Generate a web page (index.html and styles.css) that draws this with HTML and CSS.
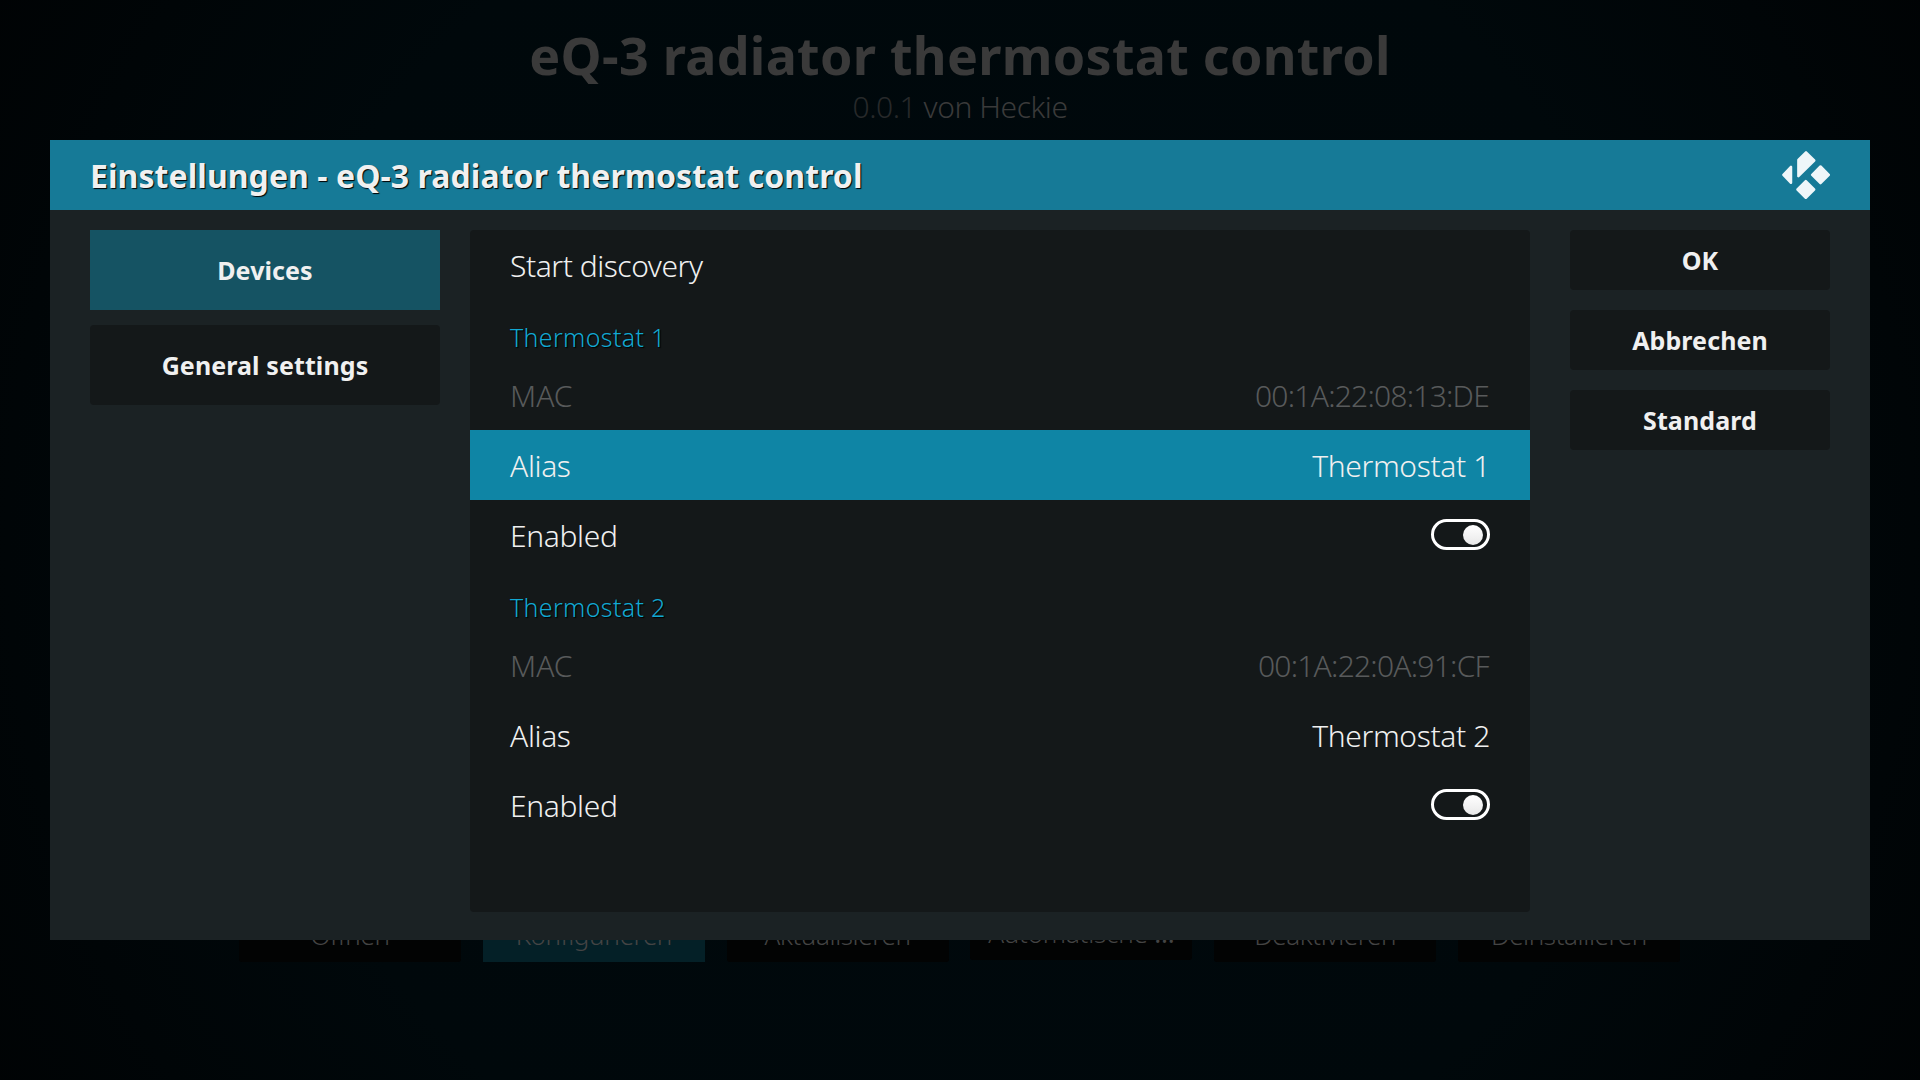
FILE: index.html
```html
<!DOCTYPE html>
<html lang="de">
<head>
<meta charset="utf-8">
<title>Einstellungen</title>
<link rel="stylesheet" href="styles.css">
</head>
<body>
<div class="screen">
  <header class="addon">
    <h1 class="addon-name">eQ-3 radiator thermostat control</h1>
    <p class="addon-meta"><span class="version">0.0.1</span> von Heckie</p>
  </header>

  <main class="dialog">
    <div class="titlebar">
      <h2 class="title">Einstellungen - eQ-3 radiator thermostat control</h2>
      <svg class="logo" viewBox="0 0 48 48" aria-hidden="true">
        <path d="M1.4 23.8 9 15.8V31.8Z"/>
        <path d="M16.4 8.8 24 1.4 32.2 9.5 16.4 25.2Z"/>
        <path d="M38.5 15.5 46.8 23.8 38.5 32.1 30.2 23.8Z"/>
        <path d="M23.8 30.2 32.1 38.5 23.8 46.8 15.5 38.5Z"/>
      </svg>
    </div>
    <div class="content">
      <nav class="categories">
        <button class="button category selected">Devices</button>
        <button class="button category">General settings</button>
      </nav>
      <section class="settings">
        <div class="row"><span class="command">Start discovery</span></div>
        <h3 class="group">Thermostat 1</h3>
        <div class="row disabled"><span>MAC</span><span class="address">00:1A:22:08:13:DE</span></div>
        <div class="row focused"><span>Alias</span><span>Thermostat 1</span></div>
        <div class="row"><span>Enabled</span><i class="toggle"></i></div>
        <h3 class="group">Thermostat 2</h3>
        <div class="row disabled"><span>MAC</span><span class="address">00:1A:22:0A:91:CF</span></div>
        <div class="row"><span>Alias</span><span>Thermostat 2</span></div>
        <div class="row"><span>Enabled</span><i class="toggle"></i></div>
      </section>
      <div class="actions">
        <button class="button">OK</button>
        <button class="button">Abbrechen</button>
        <button class="button">Standard</button>
      </div>
    </div>
  </main>

  <footer class="addon-actions">
    <div class="addon-action">Öffnen</div>
    <div class="addon-action current">Konfigurieren</div>
    <div class="addon-action">Aktualisieren</div>
    <div class="addon-action short">Automatische <b>...</b></div>
    <div class="addon-action">Deaktivieren</div>
    <div class="addon-action">Deinstallieren</div>
  </footer>
</div>
</body>
</html>
```
FILE: styles.css
```css
* { box-sizing: border-box; margin: 0; padding: 0; }

body {
  width: 1920px;
  height: 1080px;
  overflow: hidden;
  background: #000304;
  font-family: "Noto Sans", "Open Sans", sans-serif;
  color: #f0f0f0;
}

.screen {
  display: flex;
  flex-direction: column;
  height: 1080px;
  background: radial-gradient(ellipse 62% 110% at 50% 50%, #00090d 0%, #00080b 60%, #000203 100%);
}

.addon {
  height: 140px;
  padding-top: 17px;
  text-align: center;
  color: #3a3a3a;
}
.addon-name {
  font-size: 52px;
  line-height: 76px;
  font-weight: 700;
  letter-spacing: 0.28px;
}
.addon-meta {
  margin-top: 1px;
  font-size: 30px;
  line-height: 26px;
  font-weight: 300;
  letter-spacing: -0.45px;
}
.version { color: #27292a; }

/* The dialog covers the upper part of the add-on action buttons. */
.dialog {
  position: relative;
  z-index: 1;
  height: 800px;
  margin: 0 50px;
  background: #1b2224;
}

.titlebar {
  display: flex;
  justify-content: space-between;
  height: 70px;
  padding: 11px 40px 0;
  background: #167a97;
}
.title {
  padding-top: 1px;
  font-size: 32px;
  line-height: 48px;
  font-weight: 700;
  letter-spacing: 0.06px;
  text-shadow: 1px 1px 1px #000;
}
.logo {
  width: 48px;
  height: 48px;
  fill: #eef6f9;
  stroke: #eef6f9;
  stroke-width: 2.5;
  stroke-linejoin: round;
}

.content {
  display: grid;
  grid-template-columns: 350px 1060px 260px;
  column-gap: 30px;
  align-items: start;
  padding: 20px 40px 0;
}

.categories { display: flex; flex-direction: column; gap: 15px; }
.actions { display: flex; flex-direction: column; gap: 20px; width: 260px; margin-left: 10px; }

.button {
  height: 60px;
  border: 0;
  border-radius: 4px;
  background: #141819;
  color: #f0f0f0;
  font: 700 25px/34px "Noto Sans", "Open Sans", sans-serif;
  letter-spacing: 0.1px;
  text-align: center;
}
.category { height: 80px; }
.category.selected { background: #155363; border-radius: 0; }

.settings {
  height: 682px;
  border-radius: 4px;
  background: #141819;
}
.row {
  display: flex;
  justify-content: space-between;
  height: 70px;
  padding: 0 40px;
  font-size: 30px;
  line-height: 72px;
  font-weight: 300;
  letter-spacing: -0.36px;
}
.command { letter-spacing: -0.46px; }
.row.disabled { color: #585a5b; letter-spacing: 0; }
.row.focused { background: #0f85a5; }
.row .address { margin-right: 1px; letter-spacing: -0.76px; }
.group {
  height: 60px;
  padding: 0 40px;
  font-size: 25px;
  line-height: 74px;
  font-weight: 300;
  letter-spacing: 0.32px;
  color: #12a8d2;
  text-shadow: 1px 1px 1px #000;
}

.toggle {
  display: flex;
  justify-content: flex-end;
  align-items: center;
  width: 59px;
  height: 31px;
  margin-top: 19px;
  padding-right: 4px;
  border: 3px solid #fff;
  border-radius: 16px;
}
.toggle::after {
  content: "";
  width: 20px;
  height: 20px;
  border-radius: 50%;
  background: linear-gradient(#fff, #e8e8e8);
}

.addon-actions {
  display: flex;
  align-items: flex-start;
  gap: 21.8px;
  margin-top: -58px;
  padding-left: 239px;
}
.addon-action {
  width: 222px;
  height: 80px;
  border-radius: 3px;
  background: #020303;
  color: #444;
  font-size: 26px;
  line-height: 106px;
  font-weight: 300;
  letter-spacing: -0.4px;
  text-align: center;
  white-space: nowrap;
}
.addon-action.current { background: #042027; border-radius: 0; }
.addon-action.short { height: 78px; line-height: 102px; letter-spacing: -0.2px; }
```
